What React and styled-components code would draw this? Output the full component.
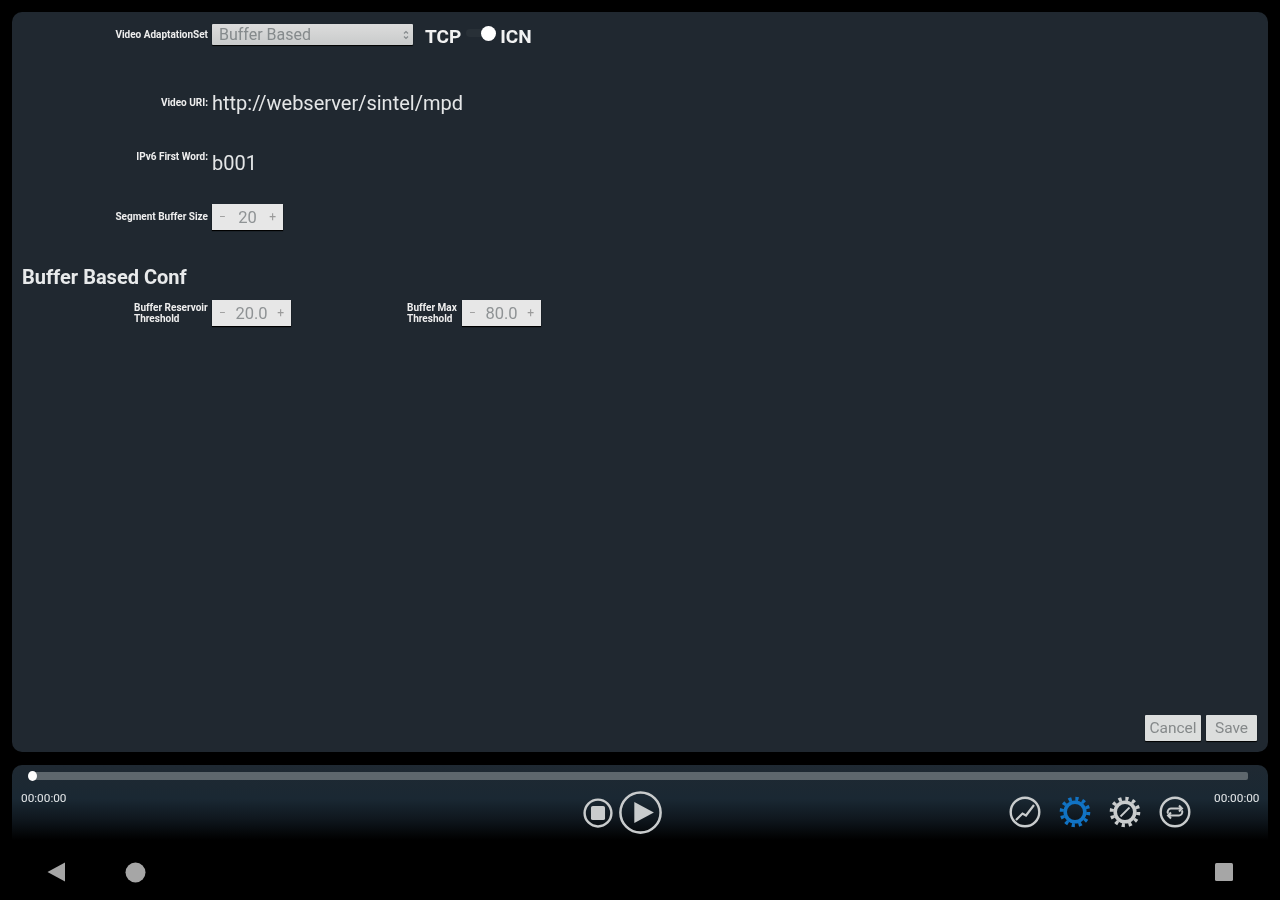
import React from 'react';
import styled, { createGlobalStyle } from 'styled-components';

const Global = createGlobalStyle`
  html, body { margin: 0; background: #000; }
  * { box-sizing: border-box; }
`;
const Screen = styled.div`
  width: 1280px; height: 900px; background: #000; display: flex; flex-direction: column;
  font-family: Roboto, "Liberation Sans", sans-serif; color: #fff; overflow: hidden;
  filter: blur(0.7px);
`;
const Panel = styled.main`
  margin: 12px 12px 0; height: 740px; border-radius: 10px; background: #202830;
  display: flex; flex-direction: column; padding-top: 12px;
`;
const Row = styled.div`
  display: flex; align-items: ${p => p.$align || 'center'}; height: ${p => p.$h}px; margin-top: ${p => p.$mt || 0}px;
`;
const Label = styled.label`
  width: ${p => p.$w || 200}px; flex: none; padding-right: 4px; text-align: right; font-size: 10px; font-weight: 700; line-height: 11.5px;
  color: #eee; white-space: nowrap;
`;
const ThresholdLabel = styled(Label)`text-align: left; padding-left: ${p => p.$pl}px;`;
const Select = styled.div`
  width: 201px; height: 21px; background: linear-gradient(#dcdcdc, #c9cbcb); border-radius: 1px; color: #858a8c; font-size: 16px;
  display: flex; align-items: center; justify-content: space-between; padding: 0 3px 0 7px;
  box-shadow: 0 1px 1px #000;
`;
const Toggle = styled.div`
  display: flex; align-items: center; margin-left: 12px; font-size: 19px; font-weight: 700; color: #f2f2f2; margin-top: 3px;
`;
const Track = styled.span`
  position: relative; display: block; width: 30px; height: 8px; margin: 0 4px 6px 5px; background: #283037; border-radius: 4px;
`;
const Knob = styled.span`
  position: absolute; right: 0px; top: -3px; width: 15px; height: 15px; border-radius: 50%; background: #fff;
`;
const Value = styled.div`
  font-size: 20px; line-height: 24px; color: #e4e6e7; font-weight: 400;
`;
const Stepper = styled.div`
  width: ${p => p.$w}px; height: 26px; background: #e7e7e7; color: #8f9395; display: flex; align-items: center; justify-content: space-between;
  padding: 0 7px; font-size: 16.5px; box-shadow: 0 1px 1px #000;
  small { font-size: 12px; color: #9a9a9a; }
`;
const Heading = styled.h2`
  margin: -1px 0 0 10px; font-size: 20px; line-height: 24px; font-weight: 700; color: #e8eaeb;
`;
const Footer = styled.div`
  margin-top: auto; display: flex; justify-content: flex-end; gap: 5px; padding: 0 11px 11px 0;
`;
const Button = styled.button`
  width: ${p => p.$w}px; height: 26px; padding: 0; border: 0; border-radius: 1px; background: #dcdedd; color: #85898a;
  font: 400 15.5px Roboto, sans-serif; box-shadow: 0 1px 1px #000;
`;
const Player = styled.section`
  margin: 13px 12px 0; height: 75px; border-radius: 10px 10px 0 0;
  background: linear-gradient(#1f2932 0%, #1a2833 45%, #0f171e 72%, #000 100%);
  padding: 7px 8px 0 9px;
`;
const Seek = styled.div`
  position: relative; margin: 0 12px 0 11px; height: 8px; background: #5e676d; border-radius: 2px;
`;
const Thumb = styled.span`
  position: absolute; left: -4px; top: -1px; width: 9px; height: 10px; border-radius: 50%; background: #fff;
`;
const Controls = styled.div`display: flex; align-items: flex-start; height: 56px;`;
const Time = styled.span`
  font-size: 11.8px; line-height: 12px; margin-top: 12px; color: #e3e6e8; flex: none; width: 46px; white-space: nowrap;
`;
const Center = styled.div`
  display: flex; align-items: center; gap: 5px; margin: 10px 0 0 516px;
`;
const Tools = styled.div`
  display: flex; align-items: center; gap: 18px; margin: 16px 23px 0 auto;
`;
const NavBar = styled.nav`
  flex: 1; display: flex; align-items: center; padding: 4px 47px 0 47px; gap: 60px; color: #a6a6a6;
`;
const NavEnd = styled.span`margin-left: auto; display: flex;`;

const Ring = ({ size, children, sw = 2.4 }) => (
  <svg width={size} height={size} viewBox="0 0 32 32" fill="none" stroke="#c9cccd" strokeWidth={sw}>
    <circle cx="16" cy="16" r="14.3" />
    {children}
  </svg>
);
const Gear = ({ color, children }) => (
  <svg width="32" height="32" viewBox="0 0 32 32" fill="none" stroke={color}>
    <circle cx="16" cy="16" r="9.8" strokeWidth="3.6" />
    <circle cx="16" cy="16" r="13.3" strokeWidth="4" strokeDasharray="3.2 3.76" />
    {children}
  </svg>
);

export default function App() {
  return (
    <Screen>
      <Global />
      <Panel>
        <Row $h={21}>
          <Label>Video AdaptationSet</Label>
          <Select>
            <span>Buffer Based</span>
            <svg width="8" height="12" viewBox="0 0 8 12" fill="none" stroke="#858a8c" strokeWidth="1.2">
              <path d="M2 4.5 4 2.5 6 4.5M2 7.5 4 9.5 6 7.5" />
            </svg>
          </Select>
          <Toggle>
            <span>TCP</span>
            <Track><Knob /></Track>
            <span>ICN</span>
          </Toggle>
        </Row>
        <Row $h={24} $mt={46}>
          <Label>Video URI:</Label>
          <Value>http://webserver/sintel/mpd</Value>
        </Row>
        <Row $h={24} $mt={36} $align="flex-start">
          <Label>IPv6 First Word:</Label>
          <Value>b001</Value>
        </Row>
        <Row $h={26} $mt={29}>
          <Label>Segment Buffer Size</Label>
          <Stepper $w={71}><small>−</small><span>20</span><small>+</small></Stepper>
        </Row>
        <Row $h={24} $mt={35}>
          <Heading>Buffer Based Conf</Heading>
        </Row>
        <Row $h={26} $mt={11}>
          <ThresholdLabel $pl={122}>Buffer Reservoir<br />Threshold</ThresholdLabel>
          <Stepper $w={79}><small>−</small><span>20.0</span><small>+</small></Stepper>
          <ThresholdLabel $w={171} $pl={116}>Buffer Max<br />Threshold</ThresholdLabel>
          <Stepper $w={79}><small>−</small><span>80.0</span><small>+</small></Stepper>
        </Row>
        <Footer>
          <Button $w={56}>Cancel</Button>
          <Button $w={51}>Save</Button>
        </Footer>
      </Panel>
      <Player>
        <Seek><Thumb /></Seek>
        <Controls>
          <Time>00:00:00</Time>
          <Center>
            <Ring size={30} sw={2.6}>
              <rect x="8.5" y="8.5" width="15" height="15" rx="2" fill="#c9cccd" stroke="none" />
            </Ring>
            <Ring size={45} sw={1.8}>
              <path d="M11.6 8.5v15L25.5 16z" fill="#c9cccd" stroke="none" />
            </Ring>
          </Center>
          <Tools>
            <Ring size={32}>
              <path d="M7 24 13.5 17.5 17 19.5 25 9" strokeWidth="2.2" />
            </Ring>
            <Gear color="#1173c4" />
            <Gear color="#c9cccd">
              <path d="M11.5 20.5 20.5 11.5" strokeWidth="1.8" />
            </Gear>
            <Ring size={32}>
              <path d="M23 12.5H12a3.5 3.5 0 0 0-3 5M20 9.5l3 3-3 3M9 19.5h11a3.5 3.5 0 0 0 3-5M12 16.5l-3 3 3 3" strokeWidth="2" />
            </Ring>
          </Tools>
          <Time>00:00:00</Time>
        </Controls>
      </Player>
      <NavBar>
        <svg width="18" height="20" viewBox="0 0 18 20"><path d="M18 0.5V19.5L0.5 10z" fill="#a6a6a6" /></svg>
        <svg width="21" height="21" viewBox="0 0 21 21"><circle cx="10.5" cy="10.5" r="10" fill="#a6a6a6" /></svg>
        <NavEnd>
          <svg width="18" height="18" viewBox="0 0 18 18"><rect width="18" height="18" rx="1.5" fill="#a6a6a6" /></svg>
        </NavEnd>
      </NavBar>
    </Screen>
  );
}
